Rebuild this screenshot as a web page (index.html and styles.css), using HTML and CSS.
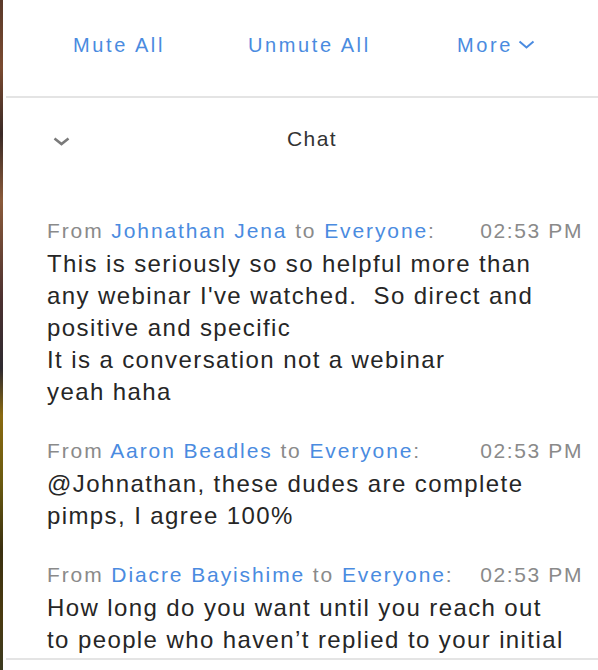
FILE: index.html
```html
<!DOCTYPE html>
<html>
<head>
<meta charset="utf-8">
<link rel="stylesheet" href="styles.css">
</head>
<body>
<div class="app">
  <div class="strip"></div>
  <div class="panel">
    <div class="toolbar">
      <span class="tbtn mute">Mute All</span>
      <span class="tbtn unmute">Unmute All</span>
      <span class="tbtn more">More<svg class="caret" width="17" height="9" viewBox="0 0 17 9"><path d="M1.5 1.5 L8.5 7.5 L15.5 1.5" fill="none" stroke="#4a8be0" stroke-width="2"/></svg></span>
    </div>
    <div class="divider"></div>
    <div class="chat-head">
      <svg class="collapse" width="17" height="9" viewBox="0 0 17 9"><path d="M1.5 1.5 L8.5 7 L15.5 1.5" fill="none" stroke="#7a7a7a" stroke-width="2.6"/></svg>
      <span class="chat-title">Chat</span>
    </div>
    <div class="messages">
      <div class="msg">
        <div class="meta"><span class="from">From <span class="name">Johnathan Jena</span> to <span class="name">Everyone</span>:</span><span class="time">02:53 PM</span></div>
        <div class="body">This is seriously so so helpful more than<br>any webinar I've watched.&nbsp; So direct and<br>positive and specific<br>It is a conversation not a webinar<br>yeah haha</div>
      </div>
      <div class="msg">
        <div class="meta"><span class="from">From <span class="name">Aaron Beadles</span> to <span class="name">Everyone</span>:</span><span class="time">02:53 PM</span></div>
        <div class="body">@Johnathan, these dudes are complete<br>pimps, I agree 100%</div>
      </div>
      <div class="msg">
        <div class="meta"><span class="from">From <span class="name">Diacre Bayishime</span> to <span class="name">Everyone</span>:</span><span class="time">02:53 PM</span></div>
        <div class="body">How long do you want until you reach out<br>to people who haven’t replied to your initial</div>
      </div>
    </div>
    <div class="divider bottom"></div>
  </div>
</div>
</body>
</html>
```
FILE: styles.css
```css
html, body {
  margin: 0;
  padding: 0;
  background: #fff;
}
body {
  font-family: "Liberation Sans", Arial, sans-serif;
  width: 598px;
  height: 670px;
  overflow: hidden;
}
.app {
  display: flex;
  height: 670px;
}
.strip {
  width: 3px;
  flex: none;
  background: linear-gradient(to bottom, #5a3a2a 0%, #7a4a30 10%, #3a2a26 20%, #8a5a3a 30%, #4a3030 45%, #2e2a30 55%, #8a6a10 62%, #6a5a10 72%, #3a3010 82%, #4a3a10 92%, #3a3a20 100%);
}
.panel {
  flex: 1;
  display: flex;
  flex-direction: column;
  padding-left: 3px;
  background: #fff;
}
.toolbar {
  height: 96px;
  flex: none;
  position: relative;
}
.tbtn {
  color: #4a8be0;
  font-size: 20px;
  letter-spacing: 2.6px;
  position: absolute;
  top: 34px;
  white-space: nowrap;
}
.mute { left: 67px; }
.unmute { left: 242px; }
.more { left: 451px; }
.caret { vertical-align: 3px; margin-left: 5px; }
.divider {
  height: 2px;
  background: #e4e4e4;
  flex: none;
}
.chat-head {
  height: 86px;
  flex: none;
  display: flex;
  align-items: center;
  justify-content: center;
  position: relative;
}
.collapse {
  position: absolute;
  left: 47px;
  top: 39px;
}
.chat-title {
  font-size: 21px;
  letter-spacing: 1.4px;
  color: #333;
  margin-left: 20px;
  position: relative;
  top: -2px;
}
.messages {
  flex: 1;
  padding: 30px 15px 0 41px;
  display: flex;
  flex-direction: column;
  gap: 26px;
  overflow: hidden;
}
.meta {
  display: flex;
  justify-content: space-between;
  font-size: 21px;
  letter-spacing: 1.9px;
  line-height: 34px;
  color: #8a8a8a;
}
.name { color: #4a8be0; }
.time { color: #8a8a8a; letter-spacing: 1.6px; }
.body {
  font-size: 24px;
  letter-spacing: 1.4px;
  line-height: 32px;
  color: #262626;
}
.bottom {
  margin-bottom: 10px;
}
```
